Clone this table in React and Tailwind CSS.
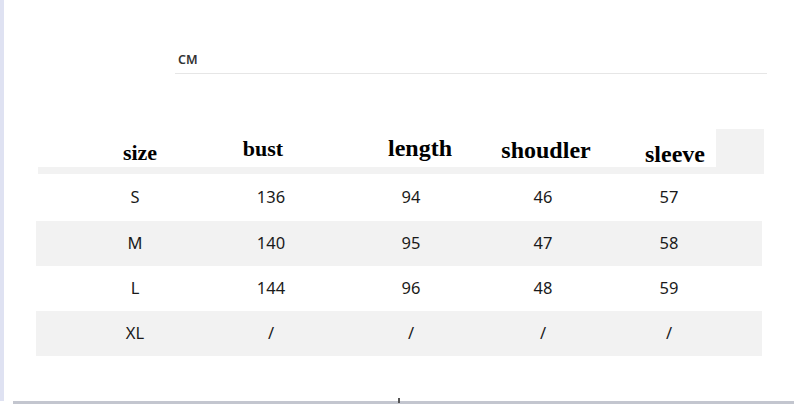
import React from 'react';

const serif = { fontFamily: '"Liberation Serif", "Times New Roman", serif' };

const headers = [
    { label: 'size', ml: 'ml-[62px]', pt: 'pt-[13px]', size: 'text-[22px]' },
    { label: 'bust', ml: 'ml-[43px]', pt: 'pt-[9px]', size: 'text-[22px]' },
    { label: 'length', ml: 'ml-[77px]', pt: 'pt-[7px]', size: 'text-[24px]' },
    { label: 'shoudler', ml: 'ml-[46px]', pt: 'pt-[9px]', size: 'text-[24px]' },
    { label: 'sleeve', ml: 'ml-[49px]', pt: 'pt-[13px]', size: 'text-[24px]' },
];

const rows = [
    { cells: ['S', '136', '94', '46', '57'], bg: 'bg-white', h: 'h-[47px]' },
    { cells: ['M', '140', '95', '47', '58'], bg: 'bg-[#f2f2f2]', h: 'h-[45px]' },
    { cells: ['L', '144', '96', '48', '59'], bg: 'bg-white', h: 'h-[45px]' },
    { cells: ['XL', '/', '/', '/', '/'], bg: 'bg-[#f2f2f2]', h: 'h-[45px]' },
];

const colWidths = ['w-[134px]', 'w-[138px]', 'w-[142px]', 'w-[122px]', 'w-[130px]'];

const App = () => {
    return (
        <div className="w-[794px] h-[404px] bg-white flex flex-col overflow-hidden relative">
            <div className="flex flex-1">
                {/* left edge strip */}
                <div className="w-[4px] bg-[#dfe2f2]"></div>

                <div className="flex-1 flex flex-col">
                    {/* unit caption */}
                    <div
                        className="ml-[171px] w-[592px] mt-[53px] h-[21px] border-b border-[#e6e6e6] pl-[3px] text-[12.5px] leading-[14px] font-semibold text-[#333]"
                        style={{ fontFamily: '"Noto Sans", sans-serif' }}
                    >
                        CM
                    </div>

                    {/* header */}
                    <div className="mt-[55px] ml-[34px] w-[726px] flex flex-col">
                        <div className="flex h-[38px]">
                            {headers.map((h) => (
                                <div key={h.label} className={`${h.ml} w-[80px] shrink-0 flex justify-center ${h.pt}`}>
                                    <span className={`${h.size} leading-none font-bold text-black whitespace-nowrap`} style={serif}>
                                        {h.label}
                                    </span>
                                </div>
                            ))}
                            <div className="ml-auto w-[48px] shrink-0 h-[44px] bg-[#f2f2f2]"></div>
                        </div>
                        <div className="h-[7px] bg-[#f2f2f2]"></div>
                    </div>

                    {/* data rows */}
                    <div className="ml-[32px] w-[726px] flex flex-col" style={{ fontFamily: '"Noto Sans", sans-serif' }}>
                        {rows.map((r) => (
                            <div key={r.cells[0]} className={`flex items-center ${r.h} ${r.bg}`}>
                                <div className="w-[32px]"></div>
                                {r.cells.map((c, i) => (
                                    <div key={i} className={`${colWidths[i]} text-center text-[16.5px] text-[#1a1a1a]`}>
                                        {c}
                                    </div>
                                ))}
                            </div>
                        ))}
                    </div>
                </div>
            </div>

            {/* bottom edge */}
            <div className="h-[3px] ml-[13px] bg-[#c3c6cf]"></div>
            <div className="absolute left-[398px] bottom-[1px] w-[2px] h-[5px] bg-[#555]"></div>
        </div>
    );
};

export default App;
